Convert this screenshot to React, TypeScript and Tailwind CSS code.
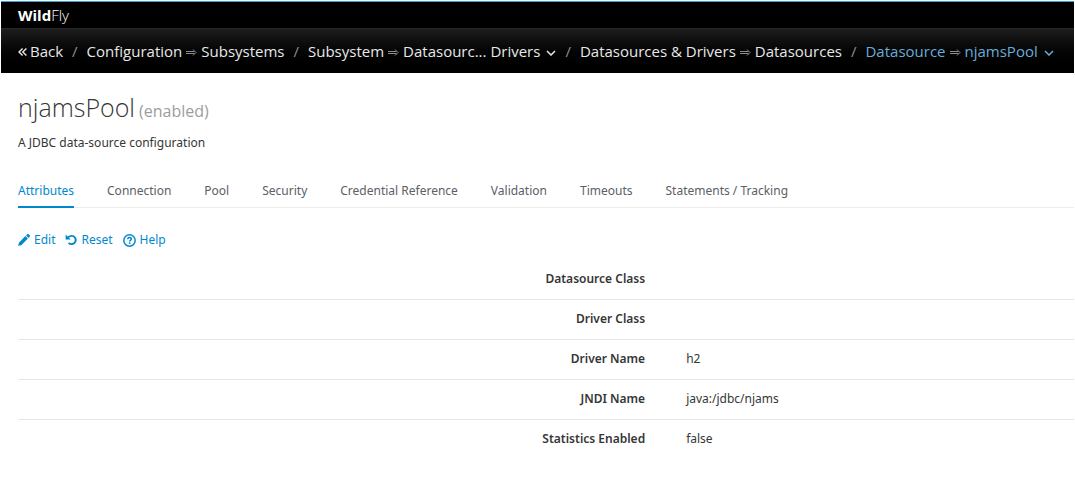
// App.tsx
import { useState } from "react";

type Crumb = { label: string; value: string; menu?: boolean; active?: boolean };

const CRUMBS: Crumb[] = [
  { label: "Configuration", value: "Subsystems" },
  { label: "Subsystem", value: "Datasourc... Drivers", menu: true },
  { label: "Datasources & Drivers", value: "Datasources" },
  { label: "Datasource", value: "njamsPool", menu: true, active: true },
];

const TABS = [
  "Attributes",
  "Connection",
  "Pool",
  "Security",
  "Credential Reference",
  "Validation",
  "Timeouts",
  "Statements / Tracking",
];

const ATTRIBUTES = [
  { name: "Datasource Class", value: "" },
  { name: "Driver Class", value: "" },
  { name: "Driver Name", value: "h2" },
  { name: "JNDI Name", value: "java:/jdbc/njams" },
  { name: "Statistics Enabled", value: "false" },
];

function ChevronDown() {
  return (
    <svg viewBox="0 0 10 6" className="mt-[3px] h-[6px] w-[10px]" fill="none" stroke="currentColor" strokeWidth="1.5" aria-hidden="true">
      <path d="M1 1l4 4 4-4" />
    </svg>
  );
}

function DoubleAngleLeft() {
  return (
    <svg viewBox="0 0 9 10" className="mt-[2px] h-[10px] w-[9px]" fill="none" stroke="currentColor" strokeWidth="1.4" aria-hidden="true">
      <path d="M4.6 1.4L1 5l3.6 3.6M8.4 1.4L4.8 5l3.6 3.6" />
    </svg>
  );
}

function DoubleArrow() {
  return (
    <svg viewBox="0 0 11 7" className="mx-1 mt-[2px] h-[7px] w-[11px] text-[#8b8d8f]" fill="none" stroke="currentColor" aria-hidden="true">
      <path d="M0 2.5h8.5M0 4.5h8.5M7 .5l3 3-3 3" />
    </svg>
  );
}

function PencilIcon() {
  return (
    <svg viewBox="0 0 12 12" className="h-3 w-3" fill="currentColor" aria-hidden="true">
      <path d="M7.4 2.1l2.5 2.5-6.3 6.3L0 12l1.1-3.6zM8.1 1.4L9 .5c.6-.6 1.3-.6 1.9 0l.6.6c.6.6.6 1.300 0 1.900l-.9.9z" />
    </svg>
  );
}

function ResetIcon() {
  return (
    <svg viewBox="0 0 12 12" className="h-3 w-3" fill="none" aria-hidden="true">
      <path d="M2.3 4.2C3.4 2.7 4.9 1.900 6.6 1.900a4.1 4.1 0 1 1-3 6.900" stroke="currentColor" strokeWidth="1.9" />
      <path d="M.6.5v5.1h5.1z" fill="currentColor" />
    </svg>
  );
}

function HelpIcon() {
  return (
    <svg viewBox="0 0 14 14" className="h-[13px] w-[13px]" fill="none" stroke="currentColor" aria-hidden="true">
      <circle cx="7" cy="7" r="6.1" strokeWidth="1.6" />
      <path d="M5 5.6c.1-1.2.9-1.8 2-1.8s2 .7 2 1.7c0 1.3-1.8 1.4-1.8 2.6" strokeWidth="1.6" />
      <path d="M7.2 9v1.7" strokeWidth="1.7" />
    </svg>
  );
}

export default function App() {
  const [tab, setTab] = useState("Attributes");

  return (
    <div className="bg-white p-px font-['Noto_Sans','Open_Sans',sans-serif] text-[12px] leading-5 text-[#363636]">
      {/* Masthead */}
      <header className="font-['Open_Sans',sans-serif] text-[15px]">
        <div className="flex h-[27px] items-center border-t border-[#39a5dc] bg-black px-[17px]">
          <a href="#" className="text-white">
            <span className="font-bold">Wild</span>
            <span className="font-light">Fly</span>
          </a>
        </div>

        <nav
          aria-label="Breadcrumb"
          className="border-t border-[#292929] bg-linear-to-b from-[#1d1d1d] to-black px-[17px] text-[#e8e8e8]"
        >
          <ol className="flex h-11 items-center whitespace-nowrap">
            <li>
              <a href="#" className="flex items-center gap-[3px]">
                <DoubleAngleLeft />
                Back
              </a>
            </li>
            {CRUMBS.map((c) => (
              <li key={c.label} className="flex items-center">
                <span className="px-[9px] text-[#8b8d8f]">/</span>
                <span className={c.active ? "flex items-center text-[#67addb]" : "flex items-center"}>
                  <a href="#">{c.label}</a>
                  <DoubleArrow />
                  {c.menu ? (
                    <button type="button" className="flex items-center gap-[6px]">
                      {c.value}
                      <ChevronDown />
                    </button>
                  ) : (
                    <a href="#">{c.value}</a>
                  )}
                </span>
              </li>
            ))}
          </ol>
        </nav>
      </header>

      <main className="pl-[17px]">
        <h1 className="flex items-baseline gap-1 pt-[14px] font-['Open_Sans',sans-serif] text-[25px] leading-10 font-light">
          njamsPool <small className="text-[16px] font-normal text-[#9c9c9c]">(enabled)</small>
        </h1>
        <p className="pt-[2px]">A JDBC data-source configuration</p>

        {/* Tabs */}
        <div role="tablist" className="mt-6 flex gap-[33px] border-b border-[#ededed]">
          {TABS.map((t) => (
            <button
              key={t}
              type="button"
              role="tab"
              aria-selected={t === tab}
              onClick={() => setTab(t)}
              className={[
                "-mb-px border-b-2 pt-1 pb-[5px] whitespace-nowrap",
                t === tab ? "border-[#0088ce] text-[#0088ce]" : "border-transparent text-[#5c6066]",
              ].join(" ")}
            >
              {t}
            </button>
          ))}
        </div>

        {/* Actions */}
        <div className="mt-[22px] flex gap-[10px] text-[#0088ce]">
          <button type="button" className="flex items-center gap-1">
            <PencilIcon />
            Edit
          </button>
          <button type="button" className="flex items-center gap-1">
            <ResetIcon />
            Reset
          </button>
          <button type="button" className="flex items-center gap-1">
            <HelpIcon />
            Help
          </button>
        </div>

        <table className="mt-[9px] w-full table-fixed">
          <tbody>
            {ATTRIBUTES.map((a) => (
              <tr key={a.name} className="h-10 border-b border-[#e6e6e6] last:border-b-0">
                <th scope="row" className="w-[61%] pr-[17px] text-right font-semibold">
                  {a.name}
                </th>
                <td className="pl-6">{a.value}</td>
              </tr>
            ))}
          </tbody>
        </table>
      </main>
    </div>
  );
}
